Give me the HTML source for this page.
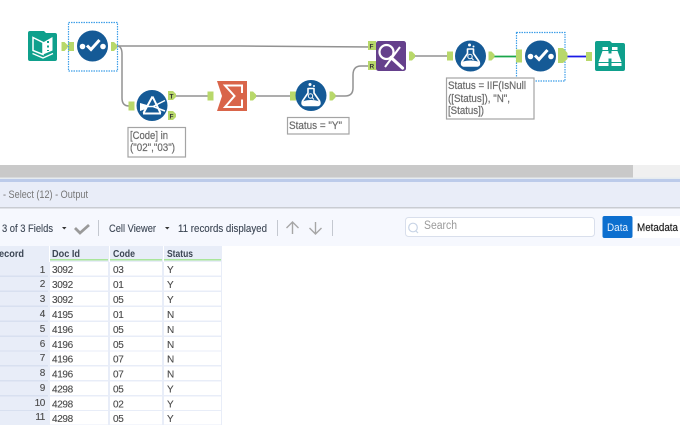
<!DOCTYPE html>
<html><head><meta charset="utf-8"><style>
html,body{margin:0;padding:0;background:#fff;width:680px;height:435px;overflow:hidden}
svg{display:block;font-family:"Liberation Sans",sans-serif;filter:blur(.3px)}
text{font-size:10.5px;fill:#444}
.h{font-weight:bold;fill:#3c4654;font-size:10.5px}
.a{fill:#6a6a6a;font-size:11px;stroke:#6a6a6a;stroke-width:.2px}
.c text{fill:#4a4a4a;font-size:10px;letter-spacing:-.35px;stroke:#4a4a4a;stroke-width:.12px}
.t{fill:#3c4654;font-size:11px;stroke:#3c4654;stroke-width:.12px}
</style></head><body>
<svg width="680" height="435" viewBox="0 0 680 435" xmlns="http://www.w3.org/2000/svg">
<defs>
<g id="sel">
<circle cx="0" cy="0" r="15.5" fill="#155a96"/>
<circle cx="-10" cy="0.500" r="2.800" fill="#fff"/><circle cx="10.500" cy="0.500" r="2.800" fill="#fff"/>
<path d="M-5.500 -0.500L-1.500 3.500L7 -6" fill="none" stroke="#fff" stroke-width="3"/>
</g>
<g id="flask">
<circle cx="0" cy="0" r="15.5" fill="#155a96"/>
<path d="M-3 -7H3V-2.500L8.500 5.500Q10 10 6 10H-6Q-10 10 -8.500 5.500L-3 -2.500Z" fill="#155a96" stroke="#fff" stroke-width="1.600" stroke-linejoin="round"/>
<path d="M-7.500 5.500Q0 3.500 7.500 5.500L8.500 7.500Q8.500 9.500 6 9.500H-6Q-8.500 9.500 -8.500 7.500Z" fill="#fff"/>
<circle cx="-0.500" cy="0.500" r="2.200" fill="none" stroke="#fff" stroke-width="1"/>
<path d="M1.200 2.200L3 4" stroke="#fff" stroke-width="1"/>
<circle cx="-1" cy="-11" r="1.500" fill="#fff"/><circle cx="3" cy="-9.500" r="1" fill="#fff"/>
</g>
<path id="in" d="M0 0H6V9H0Z" fill="#b8d86a"/>
<path id="out" d="M0 0H3L6 3V6L3 9H0Z" fill="#b8d86a"/>
</defs>

<!-- connectors -->
<g fill="none" stroke="#929292" stroke-width="1.500">
<path d="M62 46H74"/>
<path d="M117 46H240L372 47"/>
<path d="M117 46Q122 46 122 54V98Q122 106 129 106"/>
<path d="M176 96H209"/>
<path d="M255 96H292"/>
<path d="M335 96H345Q353 96 353 88V75Q353 66 361 66H369"/>
<path d="M415 56H448"/>
</g>
<path d="M494 56.500H518" stroke="#1aa64a" stroke-width="1.700"/>
<path d="M567 56.500H588" stroke="#1a1ae6" stroke-width="1.800"/>

<!-- input tool -->
<path d="M28 33Q28 31 30 31H44L46 33H55Q57 33 57 35V59Q57 61 55 61H30Q28 61 28 59Z" fill="#0fa08c"/>
<path d="M33 37.500L43 42.500V54.500L33 50.500Z" fill="#0fa08c" stroke="#fff" stroke-width="1.500"/>
<path d="M43 42.500L52.500 37V50.500L43 54.500Z" fill="#fff"/>
<path d="M48 41V43M48 45.500V47.500M48 50V51" stroke="#0fa08c" stroke-width="2"/>
<path d="M32.500 53.500L43 58L53 53.500" stroke="#fff" fill="none" stroke-width="1.300"/>
<use href="#out" x="61.500" y="42"/><use href="#in" x="68" y="42"/>

<!-- select 1 -->
<use href="#sel" x="92.500" y="46"/>
<rect x="68.500" y="22.500" width="49" height="48.500" fill="none" stroke="#3f9fe8" stroke-width="1.200" stroke-dasharray="1.500 1"/>
<use href="#out" x="111" y="42"/>

<!-- filter -->
<use href="#in" x="128.500" y="101.500"/>
<circle cx="152" cy="105.500" r="15.500" fill="#155a96"/>
<path d="M143 113.500H161M152.500 96.500L143.500 113M152.500 96.500L160.500 113" fill="none" stroke="#fff" stroke-width="2"/>
<path d="M146 106.500H153L165 100.500M153 106.500L165 111" fill="none" stroke="#fff" stroke-width="1.500"/>
<path d="M140 103L147 105V108.500L140 111Z" fill="#fff"/>
<path d="M168 91H173L176 94V97L173 100H168Z" fill="#b8d86a"/>
<path d="M168 111H173L176 114V117L173 120H168Z" fill="#b8d86a"/>
<text x="169.500" y="98.500" style="font-size:6.500px;font-weight:bold;fill:#333">T</text>
<text x="169.500" y="118.500" style="font-size:6.500px;font-weight:bold;fill:#333">F</text>

<!-- summarize -->
<use href="#in" x="207.500" y="91.500"/>
<path d="M217 81H247V111H217L222 96Z" fill="#d9654a"/>
<path d="M242 93V85.500H225L234.500 96L225 107H242V99.500" fill="none" stroke="#fff" stroke-width="2"/>
<use href="#out" x="250" y="91.500"/>

<!-- formula 1 -->
<use href="#in" x="290" y="91.500"/>
<use href="#flask" x="311" y="95.500"/>
<use href="#out" x="329.500" y="91.500"/>

<!-- join -->
<rect x="368" y="41" width="8" height="9" fill="#b8d86a"/><rect x="368" y="61" width="8" height="9" fill="#b8d86a"/>
<text x="369.500" y="48.500" style="font-size:6.500px;font-weight:bold;fill:#333">F</text>
<text x="369.500" y="68.500" style="font-size:6.500px;font-weight:bold;fill:#333">R</text>
<rect x="376" y="41" width="30" height="30" rx="2.500" fill="#65408c"/>
<circle cx="386.500" cy="52" r="7" fill="none" stroke="#fff" stroke-width="2.200"/>
<path d="M391 57.500L402.500 68" stroke="#fff" stroke-width="3.200" stroke-linecap="round"/>
<path d="M400 47L385 67" stroke="#fff" stroke-width="2"/>
<use href="#out" x="409" y="51.500"/>

<!-- formula 2 -->
<use href="#in" x="447" y="51.500"/>
<use href="#flask" x="470.500" y="56"/>
<use href="#out" x="488.500" y="51.500"/>

<!-- select 2 -->
<use href="#sel" x="540.500" y="56"/>
<rect x="516.500" y="32.500" width="48.500" height="48.500" fill="none" stroke="#3f9fe8" stroke-width="1.200" stroke-dasharray="1.500 1"/>
<rect x="516" y="49.500" width="6" height="13" fill="#b8d86a"/>
<path d="M558 48H563L567.500 53V59L563 63H558Z" fill="#b8d86a"/>
<use href="#in" x="586" y="52"/>

<!-- browse -->
<path d="M595 43Q595 41 597 41H610L612 43H623Q625 43 625 45V69Q625 71 623 71H597Q595 71 595 69Z" fill="#0fa08c"/>
<path d="M602.500 47H608V50H602.500ZM612 47H617.500V50H612Z" fill="#fff"/>
<path d="M602.500 51H608.500V66H598.500V62ZM611.500 51H617.500L621.500 62V66H611.500Z" fill="#fff"/>
<path d="M608 53.500H612V58.500H608Z" fill="#fff"/>
<path d="M598.500 62.500H608.500M611.500 62.500H621.500" stroke="#0fa08c" stroke-width="1"/>

<!-- annotations -->
<rect x="128" y="127.500" width="57.500" height="29.500" fill="#fff" stroke="#a4a4a4" stroke-width="1.200"/>
<text class="a" x="130" y="139" textLength="38" lengthAdjust="spacingAndGlyphs">[Code] in</text>
<text class="a" x="130" y="151" textLength="45" lengthAdjust="spacingAndGlyphs">("02","03")</text>
<rect x="287.500" y="117.500" width="61.500" height="16.500" fill="#fff" stroke="#a4a4a4" stroke-width="1.200"/>
<text class="a" x="289" y="129" textLength="53" lengthAdjust="spacingAndGlyphs">Status = "Y"</text>
<rect x="446.500" y="78" width="87.500" height="41" fill="#fff" stroke="#a4a4a4" stroke-width="1.200"/>
<text class="a" x="448" y="89" textLength="78" lengthAdjust="spacingAndGlyphs">Status = IIF(IsNull</text>
<text class="a" x="448" y="102" textLength="62" lengthAdjust="spacingAndGlyphs">([Status]), "N",</text>
<text class="a" x="448" y="114" textLength="36" lengthAdjust="spacingAndGlyphs">[Status])</text>

<!-- scrollbar -->
<rect x="0" y="165" width="633" height="12.500" fill="#c9c9c9"/>
<rect x="633" y="165" width="47" height="12.500" fill="#f0f0f0"/>
<rect x="0" y="177.500" width="680" height="1.500" fill="#e6ecf0"/>
<rect x="0" y="179" width="680" height="3" fill="#bccbea"/>
<rect x="0" y="182" width="680" height="25" fill="#e9edf8"/>
<rect x="0" y="207" width="680" height="1.500" fill="#c9ccd2"/>
<text x="3" y="198" style="fill:#777;font-size:11px" textLength="85" lengthAdjust="spacingAndGlyphs">- Select (12) - Output</text>

<!-- toolbar -->
<rect x="0" y="208.500" width="680" height="37.500" fill="#f6f8fe"/>
<text class="t" x="2" y="232" textLength="51" lengthAdjust="spacingAndGlyphs">3 of 3 Fields</text>
<path d="M62 227H66.500L64.250 229.500Z" fill="#333"/>
<path d="M75 228L80 233L89 225" fill="none" stroke="#9a9a9a" stroke-width="2.800"/>
<rect x="98" y="220" width="1" height="16" fill="#c4c8d0"/>
<text class="t" x="109" y="232" textLength="47" lengthAdjust="spacingAndGlyphs">Cell Viewer</text>
<path d="M165 227H169.500L167.250 229.500Z" fill="#333"/>
<text class="t" x="178" y="232" textLength="89" lengthAdjust="spacingAndGlyphs">11 records displayed</text>
<rect x="277" y="220" width="1" height="16" fill="#c4c8d0"/>
<path d="M292.500 234V222M286.500 228L292.500 222L298.500 228" fill="none" stroke="#a6a6a6" stroke-width="1.400"/>
<path d="M315.500 222V234M309.500 228L315.500 234L321.500 228" fill="none" stroke="#a6a6a6" stroke-width="1.400"/>
<rect x="332" y="220" width="1" height="16" fill="#c4c8d0"/>
<rect x="405.500" y="217.500" width="189" height="19" rx="3" fill="#fff" stroke="#d9dfec"/>
<circle cx="413" cy="227.500" r="4.300" fill="none" stroke="#c8d4e6" stroke-width="1.200"/>
<path d="M416 231L418 233" stroke="#c8d4e6" stroke-width="1.200"/>
<text x="424" y="229" style="fill:#9a9a9a;font-size:11.500px" textLength="33" lengthAdjust="spacingAndGlyphs">Search</text>
<rect x="602.500" y="216" width="30" height="22" rx="2" fill="#0d6fcf"/>
<rect x="632.500" y="216" width="47.500" height="22" fill="#fff"/>
<text x="607" y="231" style="fill:#e8f2ff;font-size:11px" textLength="21" lengthAdjust="spacingAndGlyphs">Data</text>
<text x="637" y="231" style="fill:#1a1a1a;font-size:11px;stroke:#1a1a1a;stroke-width:.15px" textLength="41" lengthAdjust="spacingAndGlyphs">Metadata</text>

<!-- table -->
<rect x="0" y="246" width="222" height="179" fill="#e8edf8"/>
<g fill="#fff">
<rect x="50" y="262" width="58" height="13.500"/><rect x="110" y="262" width="52" height="13.500"/><rect x="164" y="262" width="57" height="13.500"/>
<rect x="50" y="277" width="58" height="13.500"/><rect x="110" y="277" width="52" height="13.500"/><rect x="164" y="277" width="57" height="13.500"/>
<rect x="50" y="292" width="58" height="13.500"/><rect x="110" y="292" width="52" height="13.500"/><rect x="164" y="292" width="57" height="13.500"/>
<rect x="50" y="307" width="58" height="13.500"/><rect x="110" y="307" width="52" height="13.500"/><rect x="164" y="307" width="57" height="13.500"/>
<rect x="50" y="322" width="58" height="13.500"/><rect x="110" y="322" width="52" height="13.500"/><rect x="164" y="322" width="57" height="13.500"/>
<rect x="50" y="337" width="58" height="13.500"/><rect x="110" y="337" width="52" height="13.500"/><rect x="164" y="337" width="57" height="13.500"/>
<rect x="50" y="351.500" width="58" height="13.500"/><rect x="110" y="351.500" width="52" height="13.500"/><rect x="164" y="351.500" width="57" height="13.500"/>
<rect x="50" y="366.500" width="58" height="13.500"/><rect x="110" y="366.500" width="52" height="13.500"/><rect x="164" y="366.500" width="57" height="13.500"/>
<rect x="50" y="381.500" width="58" height="13.500"/><rect x="110" y="381.500" width="52" height="13.500"/><rect x="164" y="381.500" width="57" height="13.500"/>
<rect x="50" y="396.500" width="58" height="13.500"/><rect x="110" y="396.500" width="52" height="13.500"/><rect x="164" y="396.500" width="57" height="13.500"/>
<rect x="50" y="411" width="58" height="13.500"/><rect x="110" y="411" width="52" height="13.500"/><rect x="164" y="411" width="57" height="13.500"/>
</g>
<g fill="#d8e0f0">
<rect x="0" y="275.500" width="48" height="1.500"/><rect x="0" y="290.500" width="48" height="1.500"/><rect x="0" y="305.500" width="48" height="1.500"/><rect x="0" y="320.500" width="48" height="1.500"/><rect x="0" y="335.500" width="48" height="1.500"/><rect x="0" y="350.500" width="48" height="1"/><rect x="0" y="365" width="48" height="1.500"/><rect x="0" y="380" width="48" height="1.500"/><rect x="0" y="395" width="48" height="1.500"/><rect x="0" y="410" width="48" height="1"/>
</g>
<rect x="49" y="246" width="1" height="16" fill="#fff"/><rect x="109" y="246" width="1" height="16" fill="#fff"/><rect x="163" y="246" width="1" height="16" fill="#fff"/>
<rect x="50" y="259" width="58" height="1.500" fill="#a9e59a"/><rect x="110" y="259" width="52" height="1.500" fill="#a9e59a"/><rect x="164" y="259" width="57" height="1.500" fill="#a9e59a"/>

<text class="h" x="-1" y="257" textLength="25" lengthAdjust="spacingAndGlyphs">ecord</text>
<text class="h" x="52" y="257" textLength="28" lengthAdjust="spacingAndGlyphs">Doc Id</text>
<text class="h" x="113" y="257" textLength="22" lengthAdjust="spacingAndGlyphs">Code</text>
<text class="h" x="167" y="257" textLength="26" lengthAdjust="spacingAndGlyphs">Status</text>

<g class="c" text-anchor="end">
<text x="45" y="273">1</text><text x="45" y="287">2</text><text x="45" y="302">3</text><text x="45" y="317">4</text><text x="45" y="332">5</text><text x="45" y="347">6</text><text x="45" y="361">7</text><text x="45" y="376">8</text><text x="45" y="391">9</text><text x="45" y="406">10</text><text x="45" y="420">11</text>
</g>
<g class="c">
<text x="52" y="273">3092</text><text x="113" y="273">03</text><text x="167" y="273">Y</text>
<text x="52" y="288">3092</text><text x="113" y="288">01</text><text x="167" y="288">Y</text>
<text x="52" y="303">3092</text><text x="113" y="303">05</text><text x="167" y="303">Y</text>
<text x="52" y="318">4195</text><text x="113" y="318">01</text><text x="167" y="318">N</text>
<text x="52" y="333">4196</text><text x="113" y="333">05</text><text x="167" y="333">N</text>
<text x="52" y="348">4196</text><text x="113" y="348">05</text><text x="167" y="348">N</text>
<text x="52" y="362.500">4196</text><text x="113" y="362.500">07</text><text x="167" y="362.500">N</text>
<text x="52" y="377.500">4196</text><text x="113" y="377.500">07</text><text x="167" y="377.500">N</text>
<text x="52" y="392.500">4298</text><text x="113" y="392.500">05</text><text x="167" y="392.500">Y</text>
<text x="52" y="407.500">4298</text><text x="113" y="407.500">02</text><text x="167" y="407.500">Y</text>
<text x="52" y="422">4298</text><text x="113" y="422">05</text><text x="167" y="422">Y</text>
</g>
</svg>
</body></html>
